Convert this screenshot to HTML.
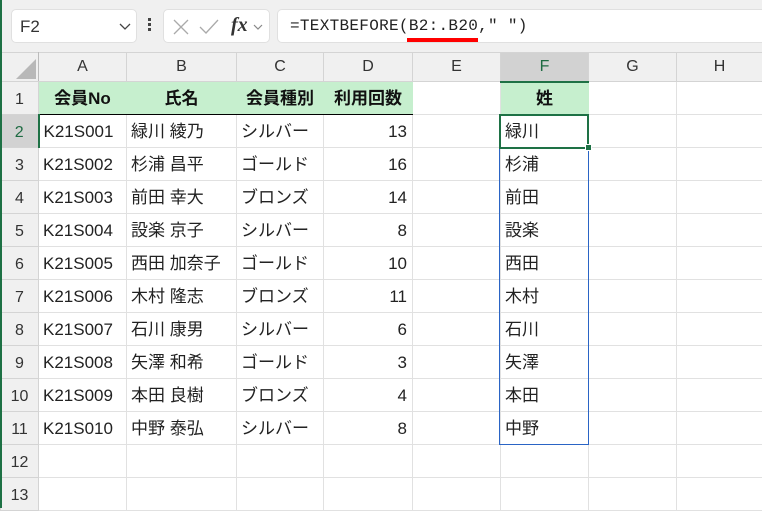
<!DOCTYPE html>
<html><head><meta charset="utf-8"><style>
*{margin:0;padding:0;box-sizing:border-box}
body{width:762px;height:508px;overflow:hidden;background:#fff;font-family:"Liberation Sans","Noto Sans CJK JP",sans-serif;position:relative}
.top{position:absolute;left:0;top:0;width:762px;height:52px;background:#f0f0f0;border-left:2px solid #1e7145}
.box{position:absolute;top:9px;height:34px;background:#fff;border:1px solid #e0e0e0;border-radius:5px}
table{position:absolute;left:0;top:52px;border-collapse:collapse;table-layout:fixed;width:762px}
td{height:33px;border:1px solid #e1e1e1;font-size:17px;color:#222;padding:2px 4px 0 4px;white-space:nowrap;overflow:hidden}
td.j{padding:0 4px 3px 4px}
tr.h td{height:29px;background:#f0f0f0;text-align:center;font-size:16px;color:#333;border-color:#d4d4d4;padding:0}
td.r{background:#f0f0f0;text-align:center;font-size:16px;color:#333;border-color:#d4d4d4;padding:4px 0 0 0}
td.g{background:#c6efce;font-weight:bold;text-align:center;font-size:17px;color:#111;padding:0 0 3px 0}
tr.one td.g{border-bottom:1px solid #000;border-left-color:#c6efce;border-right-color:#c6efce}
td.n{text-align:right;padding-right:5px}
</style></head><body>
<div class="top"></div>
<div class="box" style="left:11px;width:126px"><span style="position:absolute;left:8px;top:7px;font-size:17px;color:#333">F2</span>
<svg style="position:absolute;left:107px;top:13px" width="12" height="8"><path d="M1 1l5 5 5-5" fill="none" stroke="#444" stroke-width="1.3"/></svg></div>
<div style="position:absolute;left:148px;top:18px;width:3px;height:3px;background:#444;box-shadow:0 5px 0 #444,0 10px 0 #444"></div>
<div class="box" style="left:163px;width:107px">
<svg style="position:absolute;left:8px;top:8px" width="18" height="18"><path d="M2 2l14 14M16 2L2 16" stroke="#aaa" stroke-width="1.3"/></svg>
<svg style="position:absolute;left:35px;top:8px" width="20" height="18"><path d="M1 9l6 6L19 2" fill="none" stroke="#aaa" stroke-width="1.3"/></svg>
<span style="position:absolute;left:67px;top:4px;font-family:'Liberation Serif',serif;font-style:italic;font-size:20px;color:#333;font-weight:bold">fx</span>
<svg style="position:absolute;left:89px;top:14px" width="10" height="7"><path d="M1 1l4 4 4-4" fill="none" stroke="#888" stroke-width="1.2"/></svg></div>
<div class="box" style="left:277px;width:490px;border-right:none;border-radius:5px 0 0 5px"><span style="position:absolute;left:12px;top:7px;font-family:'Liberation Mono',monospace;font-size:16px;color:#222;letter-spacing:0.3px">=TEXTBEFORE(B2:.B20," ")</span>
<div style="position:absolute;left:129px;top:28px;width:71px;height:4px;background:#f00"></div></div>
<table>
<colgroup><col style="width:38px"><col style="width:88px"><col style="width:110px"><col style="width:87px"><col style="width:89px"><col style="width:88px"><col style="width:88px"><col style="width:88px"><col style="width:86px"></colgroup>
<tr class="h"><td style="background:#f0f0f0;border-right-color:#bbb;position:relative"><svg width="22" height="20" style="position:absolute;right:2px;bottom:2px"><path d="M22 0L22 20 2 20Z" fill="#b8b8b8"/></svg></td><td>A</td><td>B</td><td>C</td><td>D</td><td>E</td><td style="background:#d2d2d2;color:#1e6b42;border-bottom:2px solid #1e7145">F</td><td>G</td><td>H</td></tr>
<tr class="one"><td class="r">1</td><td class="g">会員No</td><td class="g">氏名</td><td class="g">会員種別</td><td class="g">利用回数</td><td></td><td class="g" style="border-color:#c6efce">姓</td><td></td><td></td></tr>
<tr><td class="r" style="background:#d2d2d2;color:#1e6b42;border-right:2px solid #1e7145">2</td><td>K21S001</td><td class="j">緑川 綾乃</td><td class="j">シルバー</td><td class="n">13</td><td></td><td class="j">緑川</td><td></td><td></td></tr>
<tr><td class="r">3</td><td>K21S002</td><td class="j">杉浦 昌平</td><td class="j">ゴールド</td><td class="n">16</td><td></td><td class="j">杉浦</td><td></td><td></td></tr>
<tr><td class="r">4</td><td>K21S003</td><td class="j">前田 幸大</td><td class="j">ブロンズ</td><td class="n">14</td><td></td><td class="j">前田</td><td></td><td></td></tr>
<tr><td class="r">5</td><td>K21S004</td><td class="j">設楽 京子</td><td class="j">シルバー</td><td class="n">8</td><td></td><td class="j">設楽</td><td></td><td></td></tr>
<tr><td class="r">6</td><td>K21S005</td><td class="j">西田 加奈子</td><td class="j">ゴールド</td><td class="n">10</td><td></td><td class="j">西田</td><td></td><td></td></tr>
<tr><td class="r">7</td><td>K21S006</td><td class="j">木村 隆志</td><td class="j">ブロンズ</td><td class="n">11</td><td></td><td class="j">木村</td><td></td><td></td></tr>
<tr><td class="r">8</td><td>K21S007</td><td class="j">石川 康男</td><td class="j">シルバー</td><td class="n">6</td><td></td><td class="j">石川</td><td></td><td></td></tr>
<tr><td class="r">9</td><td>K21S008</td><td class="j">矢澤 和希</td><td class="j">ゴールド</td><td class="n">3</td><td></td><td class="j">矢澤</td><td></td><td></td></tr>
<tr><td class="r">10</td><td>K21S009</td><td class="j">本田 良樹</td><td class="j">ブロンズ</td><td class="n">4</td><td></td><td class="j">本田</td><td></td><td></td></tr>
<tr><td class="r">11</td><td>K21S010</td><td class="j">中野 泰弘</td><td class="j">シルバー</td><td class="n">8</td><td></td><td class="j">中野</td><td></td><td></td></tr>
<tr><td class="r">12</td><td></td><td></td><td></td><td></td><td></td><td></td><td></td><td></td></tr>
<tr><td class="r">13</td><td></td><td></td><td></td><td></td><td></td><td></td><td></td><td></td></tr>
</table>
<div style="position:absolute;left:499px;top:114px;width:90px;height:331px;border:1.5px solid #2a64c5"></div>
<div style="position:absolute;left:499px;top:114px;width:90px;height:35px;border:2px solid #1e7145"></div>
<div style="position:absolute;left:585px;top:144px;width:7px;height:7px;background:#1e7145;border:1px solid #fff"></div>
<div style="position:absolute;left:0;top:0;width:2px;height:508px;background:#1e7145"></div>
</body></html>
